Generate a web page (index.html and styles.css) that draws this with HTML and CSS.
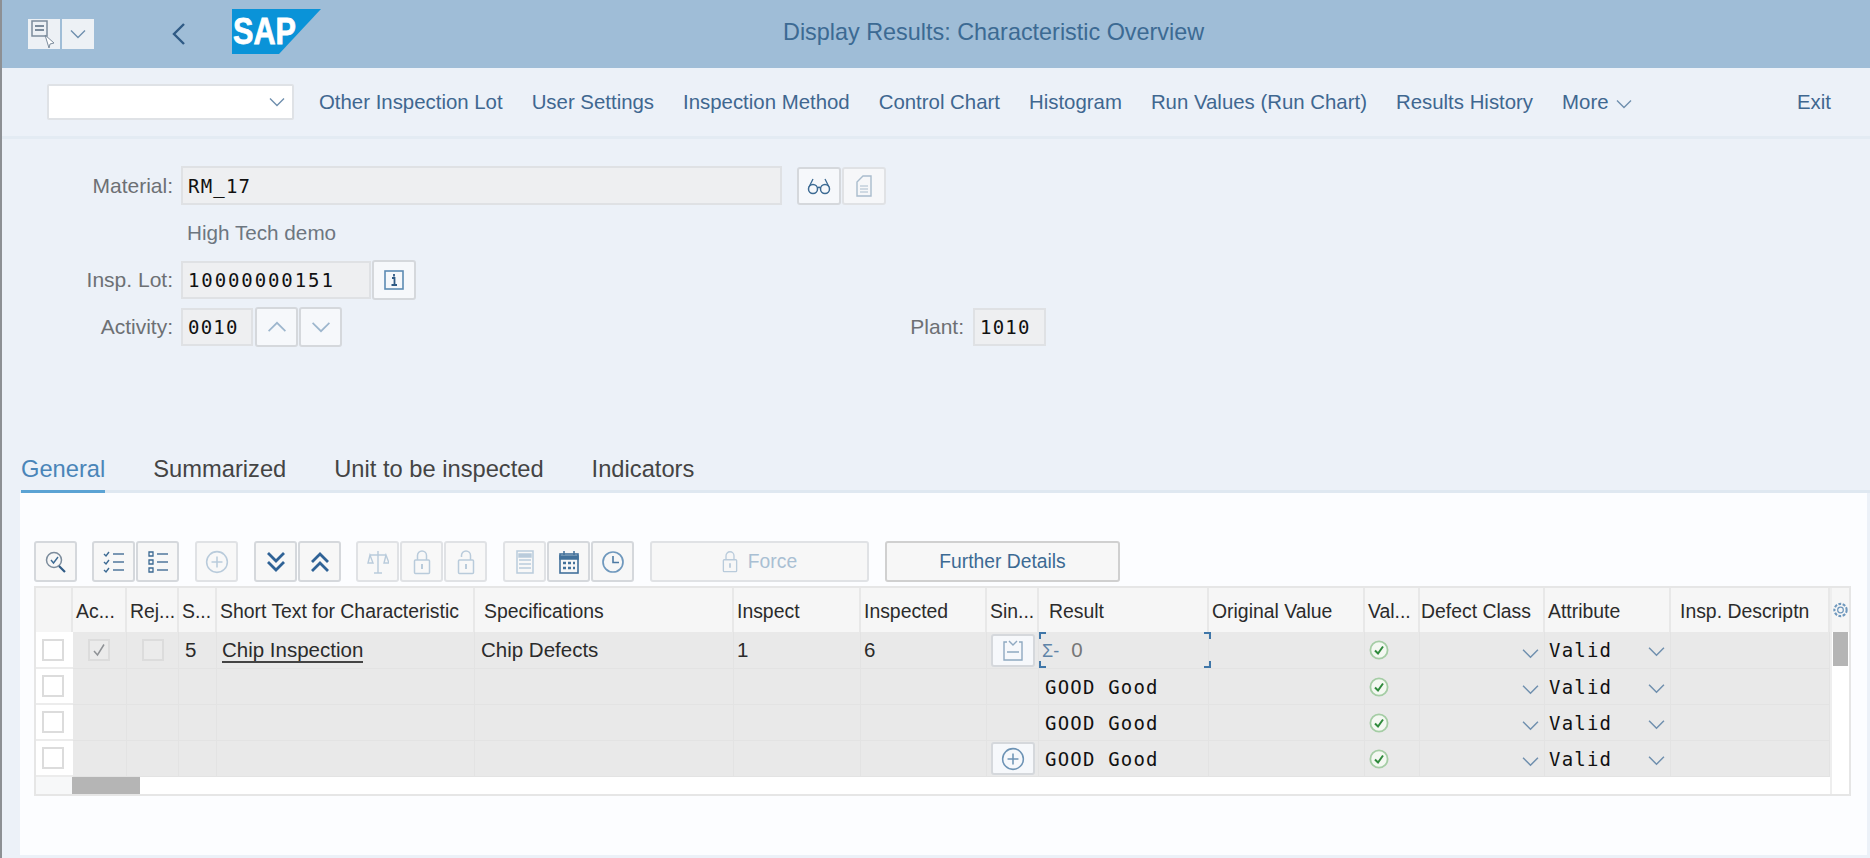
FILE: index.html
```html
<!DOCTYPE html>
<html lang="en">
<head>
  <meta charset="UTF-8">
  <title>Display Results: Characteristic Overview</title>
  <link rel="stylesheet" href="styles.css">
</head>
<body>
  <svg class="sprite" xmlns="http://www.w3.org/2000/svg">
    <symbol id="i-down" viewBox="0 0 16 10"><path d="M1 1.5 8 8.5 15 1.5" fill="none" stroke="currentColor" stroke-width="1.4"/></symbol>
    <symbol id="i-up" viewBox="0 0 16 10"><path d="M1 8.5 8 1.5 15 8.5" fill="none" stroke="currentColor" stroke-width="1.4"/></symbol>
    <symbol id="i-plus" viewBox="0 0 22 22"><circle cx="11" cy="11" r="9.5" fill="none" stroke="currentColor" stroke-width="1.4"/><path d="M11 6v10M6 11h10" stroke="currentColor" stroke-width="1.4"/></symbol>
    <symbol id="i-lock" viewBox="0 0 18 26"><rect x="1.5" y="11" width="15" height="13.5" rx="1" fill="none" stroke="currentColor" stroke-width="1.5"/><path d="M4.5 11V6.5a4.5 4.5 0 0 1 9 0V11" fill="none" stroke="currentColor" stroke-width="1.5"/><path d="M9 15v5" stroke="currentColor" stroke-width="2"/></symbol>
    <symbol id="i-unlock" viewBox="0 0 18 26"><rect x="1.5" y="11" width="15" height="13.5" rx="1" fill="none" stroke="currentColor" stroke-width="1.5"/><path d="M4.5 8V6.500a4.500 4.500 0 0 1 9 0V11" fill="none" stroke="currentColor" stroke-width="1.5"/><path d="M9 15v5" stroke="currentColor" stroke-width="2"/></symbol>
    <symbol id="i-check" viewBox="0 0 20 22"><circle cx="10" cy="11" r="8.600" fill="#f4f8f2" stroke="#a5cda5" stroke-width="1.800"/><path d="M6 11.500 9 14.500 14 7.500" fill="none" stroke="#2f8a3c" stroke-width="2"/></symbol>
  </svg>

  <div class="app">
    <header class="shell-bar">
      <div class="menu-btns">
        <button class="menu-btn">
          <svg width="28" height="30" viewBox="0 0 28 30"><rect x="2" y="2" width="15" height="15" fill="none" stroke="#7c8c9c" stroke-width="1.500"/><path d="M5 7h9M5 11h9" stroke="#7c8c9c" stroke-width="1.800"/><path d="M15 16l9 8-4 1-1 4z" fill="#fff" stroke="#7c8c9c"/></svg>
        </button>
        <button class="menu-btn menu-btn-arrow"><svg class="chev" width="16" height="10"><use href="#i-down"/></svg></button>
      </div>
      <svg class="back" width="16" height="24" viewBox="0 0 16 24"><path d="M13 2 3 12 13 22" fill="none" stroke="#2f5a85" stroke-width="2.400"/></svg>
      <svg class="logo" width="89" height="45" viewBox="0 0 89 45">
        <polygon points="0,0 89,0 47,45 0,45" fill="#0a93d8"/>
        <text x="1" y="35" class="logo-text" textLength="63" lengthAdjust="spacingAndGlyphs">SAP</text>
      </svg>
      <h1 class="title">Display Results: Characteristic Overview</h1>
    </header>

    <nav class="toolbar">
      <div class="combo"><svg class="chev" width="16" height="10"><use href="#i-down"/></svg></div>
      <a class="tool-link">Other Inspection Lot</a>
      <a class="tool-link">User Settings</a>
      <a class="tool-link">Inspection Method</a>
      <a class="tool-link">Control Chart</a>
      <a class="tool-link">Histogram</a>
      <a class="tool-link">Run Values (Run Chart)</a>
      <a class="tool-link">Results History</a>
      <a class="tool-link more">More <svg class="chev" width="16" height="10"><use href="#i-down"/></svg></a>
      <a class="tool-link exit">Exit</a>
    </nav>

    <section class="form">
      <div class="form-row row-material">
        <label class="form-label">Material:</label>
        <div class="input input-long">RM_17</div>
        <button class="btn btn-first">
          <svg width="24" height="18" viewBox="0 0 24 18"><circle cx="6" cy="12" r="4.500" fill="none" stroke="#3c6a93" stroke-width="1.500"/><circle cx="18" cy="12" r="4.500" fill="none" stroke="#3c6a93" stroke-width="1.500"/><path d="M10.500 11q1.500-1.500 3 0M2 10 6 2M22 10 18 2" fill="none" stroke="#3c6a93" stroke-width="1.300"/></svg>
        </button>
        <button class="btn btn-off">
          <svg width="18" height="22" viewBox="0 0 18 22"><path d="M2 7 8 1h8v20H2z" fill="none" stroke="#a9bccd" stroke-width="1.400"/><path d="M5 11h8M5 14h8M5 17h8" stroke="#a9bccd"/></svg>
        </button>
      </div>
      <div class="form-row row-desc">
        <span class="form-desc">High Tech demo</span>
      </div>
      <div class="form-row row-lot">
        <label class="form-label">Insp. Lot:</label>
        <div class="input input-lot">10000000151</div>
        <button class="btn btn-tall">
          <svg width="20" height="20" viewBox="0 0 20 20"><rect x="1" y="1" width="18" height="18" fill="none" stroke="#5d8bb3" stroke-width="1.600"/><path d="M8 8h2.500v7M7.500 15h5.500M10 4v2.500" fill="none" stroke="#2f5a85" stroke-width="1.800"/></svg>
        </button>
      </div>
      <div class="form-row row-activity">
        <label class="form-label">Activity:</label>
        <div class="input input-activity">0010</div>
        <button class="btn btn-arrow"><svg class="chev-light" width="20" height="12"><use href="#i-up"/></svg></button>
        <button class="btn btn-arrow"><svg class="chev-light" width="20" height="12"><use href="#i-down"/></svg></button>
        <label class="form-label plant-label">Plant:</label>
        <div class="input input-plant">1010</div>
      </div>
    </section>

    <div class="tabs">
      <a class="tab active">General</a>
      <a class="tab">Summarized</a>
      <a class="tab">Unit to be inspected</a>
      <a class="tab">Indicators</a>
    </div>

    <main class="panel">
      <div class="grid-tools">
        <div class="tool-group">
          <button class="btn tool"><svg width="24" height="26" viewBox="0 0 24 26"><circle cx="10" cy="11" r="7.500" fill="none" stroke="#7c8c9c" stroke-width="1.500"/><path d="M7 11l2.500 3L14 8" fill="none" stroke="#3c6a93" stroke-width="1.400"/><path d="M15 17l6 6" stroke="#2f5a85" stroke-width="2.200"/></svg></button>
        </div>
        <div class="tool-group tight">
          <button class="btn tool"><svg width="22" height="24" viewBox="0 0 22 24"><path d="M1 4l2 2 3-4M1 12l2 2 3-4M1 20l2 2 3-4" fill="none" stroke="#3c6a93" stroke-width="1.400"/><path d="M10 4h11M10 12h11M10 20h11" stroke="#7a97b3" stroke-width="1.800"/></svg></button>
          <button class="btn tool"><svg width="22" height="24" viewBox="0 0 22 24"><path d="M2 2h4v4H2zM2 10h4v4H2zM2 18h4v4H2z" fill="none" stroke="#3c6a93" stroke-width="1.300"/><path d="M10 4h11M10 12h11M10 20h11" stroke="#7a97b3" stroke-width="1.800"/></svg></button>
        </div>
        <div class="tool-group">
          <button class="btn tool btn-off"><svg class="ico-off" width="24" height="24"><use href="#i-plus"/></svg></button>
        </div>
        <div class="tool-group">
          <button class="btn tool"><svg width="24" height="24" viewBox="0 0 24 24"><path d="M4 3l8 8 8-8M4 12l8 8 8-8" fill="none" stroke="#2f6296" stroke-width="2.800"/></svg></button>
          <button class="btn tool"><svg width="24" height="24" viewBox="0 0 24 24"><path d="M4 12l8-8 8 8M4 21l8-8 8 8" fill="none" stroke="#2f6296" stroke-width="2.800"/></svg></button>
        </div>
        <div class="tool-group tight">
          <button class="btn tool btn-off"><svg class="ico-off" width="22" height="26" viewBox="0 0 22 26"><path d="M11 2v22M7 24h8M3 6h16M3 6l-2 8h5zM19 6l-2 8h5z" fill="none" stroke="currentColor" stroke-width="1.400"/></svg></button>
          <button class="btn tool btn-off"><svg class="ico-off" width="18" height="26"><use href="#i-lock"/></svg></button>
          <button class="btn tool btn-off"><svg class="ico-off" width="18" height="26"><use href="#i-unlock"/></svg></button>
        </div>
        <div class="tool-group">
          <button class="btn tool btn-off"><svg class="ico-off" width="18" height="24" viewBox="0 0 18 24"><rect x="1" y="1" width="16" height="22" fill="none" stroke="currentColor" stroke-width="1.500"/><path d="M3 4h12v3H3zM3 10h12M3 14h12M3 18h12" fill="currentColor" stroke="currentColor" stroke-width="1.400"/></svg></button>
          <button class="btn tool"><svg width="20" height="24" viewBox="0 0 20 24"><rect x="1" y="4" width="18" height="19" fill="none" stroke="#43719b" stroke-width="1.600"/><path d="M1 6h18v3H1zM5 1v4M15 1v4" fill="#43719b" stroke="#43719b" stroke-width="1.500"/><path d="M4 13h3M9 13h3M14 13h2M4 18h3M9 18h3M14 18h2" stroke="#43719b" stroke-width="2.500"/></svg></button>
          <button class="btn tool"><svg width="24" height="24" viewBox="0 0 24 24"><circle cx="12" cy="12" r="10" fill="none" stroke="#6f98bd" stroke-width="1.700"/><path d="M12 6v6.500h6" fill="none" stroke="#4d7aa3" stroke-width="1.600"/></svg></button>
        </div>
        <div class="tool-group">
          <button class="btn text-btn force btn-off"><svg class="ico-off" width="16" height="23"><use href="#i-lock"/></svg>Force</button>
        </div>
        <div class="tool-group">
          <button class="btn text-btn further">Further Details</button>
        </div>
      </div>

      <div class="frame">
        <table class="grid">
          <colgroup>
            <col class="c-sel"><col class="c-ac"><col class="c-rej"><col class="c-s"><col class="c-short"><col class="c-spec">
            <col class="c-insp"><col class="c-done"><col class="c-sin"><col class="c-result"><col class="c-orig">
            <col class="c-val"><col class="c-defect"><col class="c-attr"><col class="c-desc">
          </colgroup>
          <thead>
            <tr>
              <th class="sel"></th><th>Ac...</th><th>Rej...</th><th>S...</th><th>Short Text for Characteristic</th>
              <th class="pad-spec">Specifications</th><th>Inspect</th><th>Inspected</th><th>Sin...</th><th class="pad-result">Result</th>
              <th>Original Value</th><th>Val...</th><th class="pad-none">Defect Class</th><th>Attribute</th><th class="pad-spec">Insp. Descriptn</th>
            </tr>
          </thead>
          <tbody>
            <tr class="row-first">
              <td class="sel"><span class="box"></span></td>
              <td class="center"><span class="box box-off"><svg width="14" height="14" viewBox="0 0 14 14"><path d="M2 8l3.500 4L12 1.500" fill="none" stroke="#8f9296" stroke-width="1.500"/></svg></span></td>
              <td class="center"><span class="box box-off"></span></td>
              <td class="num">5</td>
              <td class="link-cell"><a class="link">Chip Inspection</a></td>
              <td class="spec-cell">Chip Defects</td>
              <td>1</td>
              <td>6</td>
              <td class="center"><button class="btn cell-btn"><svg width="22" height="24" viewBox="0 0 22 24"><path d="M5 4h-3v18h18V4h-3M7 3l4 4 4-4M5 14h12" fill="none" stroke="#8fa9c1" stroke-width="1.400"/></svg></button></td>
              <td class="focus-cell">
                <span class="corner tl"></span><span class="corner tr"></span><span class="corner bl"></span><span class="corner br"></span>
                <span class="sigma">Σ-</span><span class="zero">0</span>
              </td>
              <td></td>
              <td class="pad-val"><svg width="20" height="22"><use href="#i-check"/></svg></td>
              <td class="drop"><svg class="chev" width="17" height="11"><use href="#i-down"/></svg></td>
              <td class="drop mono"><span>Valid</span><svg class="chev" width="17" height="11"><use href="#i-down"/></svg></td>
              <td></td>
            </tr>
            <tr>
              <td class="sel"><span class="box"></span></td><td></td><td></td><td></td><td></td><td></td><td></td><td></td><td></td>
              <td class="mono result">GOOD Good</td><td></td>
              <td class="pad-val"><svg width="20" height="22"><use href="#i-check"/></svg></td>
              <td class="drop"><svg class="chev" width="17" height="11"><use href="#i-down"/></svg></td>
              <td class="drop mono"><span>Valid</span><svg class="chev" width="17" height="11"><use href="#i-down"/></svg></td>
              <td></td>
            </tr>
            <tr>
              <td class="sel"><span class="box"></span></td><td></td><td></td><td></td><td></td><td></td><td></td><td></td><td></td>
              <td class="mono result">GOOD Good</td><td></td>
              <td class="pad-val"><svg width="20" height="22"><use href="#i-check"/></svg></td>
              <td class="drop"><svg class="chev" width="17" height="11"><use href="#i-down"/></svg></td>
              <td class="drop mono"><span>Valid</span><svg class="chev" width="17" height="11"><use href="#i-down"/></svg></td>
              <td></td>
            </tr>
            <tr>
              <td class="sel"><span class="box"></span></td><td></td><td></td><td></td><td></td><td></td><td></td><td></td>
              <td class="center"><button class="btn cell-btn"><svg class="ico-plus" width="24" height="24"><use href="#i-plus"/></svg></button></td>
              <td class="mono result">GOOD Good</td><td></td>
              <td class="pad-val"><svg width="20" height="22"><use href="#i-check"/></svg></td>
              <td class="drop"><svg class="chev" width="17" height="11"><use href="#i-down"/></svg></td>
              <td class="drop mono"><span>Valid</span><svg class="chev" width="17" height="11"><use href="#i-down"/></svg></td>
              <td></td>
            </tr>
          </tbody>
        </table>
        <div class="vscroll">
          <div class="vscroll-head">
            <svg width="18" height="18" viewBox="0 0 18 18"><circle cx="9" cy="9" r="3" fill="none" stroke="#6f98bd" stroke-width="1.300"/><circle cx="9" cy="9" r="6.500" fill="none" stroke="#6f98bd" stroke-width="2.200" stroke-dasharray="3 1.600"/></svg>
          </div>
          <div class="vscroll-thumb"></div>
        </div>
        <div class="hscroll">
          <div class="hscroll-corner"></div>
          <div class="hscroll-thumb"></div>
        </div>
        <div class="scroll-end"></div>
      </div>
    </main>
  </div>
</body>
</html>
```

FILE: styles.css
```css
* {
  box-sizing: border-box;
}

body {
  margin: 0;
  height: 858px;
  overflow: hidden;
  background-color: #ecf1f8;
  font-family: "Liberation Sans", Arial, sans-serif;
}

.sprite {
  display: none;
}

.app {
  height: 858px;
  border-left: 2px solid #8d9094;
}

button {
  font-family: inherit;
  padding: 0;
}

.chev {
  color: #6f8fae;
}

.chev-light {
  color: #9db6cd;
}

.ico-off {
  color: #b9cbdb;
}

.ico-plus {
  color: #6d93b5;
}

/* top bar */
.shell-bar {
  display: flex;
  align-items: center;
  height: 68px;
  padding-left: 26px;
  position: relative;
  background-color: #9fbdd7;
}

.menu-btns {
  display: flex;
  gap: 2px;
}

.menu-btn {
  display: flex;
  align-items: center;
  justify-content: center;
  width: 32px;
  height: 30px;
  border: 0;
  background-color: #edf1f5;
}

.back {
  margin-left: 77px;
}

.logo {
  margin-left: 45px;
  margin-top: -6px;
}

.logo-text {
  font-family: "Liberation Sans", Arial, sans-serif;
  font-size: 36px;
  font-weight: bold;
  fill: #fff;
  stroke: #fff;
  stroke-width: 0.8px;
}

.title {
  position: absolute;
  top: 0;
  left: 781px;
  margin: 0;
  font-size: 23.4px;
  font-weight: normal;
  line-height: 64px;
  color: #3c6a93;
}

/* toolbar */
.toolbar {
  display: flex;
  align-items: center;
  height: 71px;
  padding-left: 45px;
  padding-right: 39px;
  border-bottom: 3px solid #e3ebf3;
}

.combo {
  display: flex;
  align-items: center;
  justify-content: flex-end;
  width: 247px;
  height: 36px;
  margin-right: 25px;
  padding-right: 7px;
  border: 2px solid #dfe2e6;
  border-radius: 2px;
  background-color: #fff;
}

.tool-link {
  margin-right: 29px;
  font-size: 20.4px;
  color: #3f6790;
}

.more {
  margin-right: 0;
}

.more .chev {
  margin-left: 2px;
}

.exit {
  margin-left: auto;
  margin-right: 0;
}

/* form */
.form {
  height: 312px;
  padding-top: 27px;
}

.form-row {
  display: flex;
  align-items: center;
}

.row-material {
  height: 39px;
}

.row-desc {
  height: 55px;
  padding-left: 185px;
}

.row-lot {
  height: 40px;
}

.row-activity {
  height: 40px;
  margin-top: 7px;
}

.form-label {
  width: 171px;
  margin-right: 8px;
  font-size: 21px;
  color: #6d7074;
  text-align: right;
}

.plant-label {
  width: 621px;
  margin-right: 9px;
}

.form-desc {
  font-size: 20.7px;
  color: #6d7680;
}

.input {
  display: flex;
  align-items: center;
  height: 38px;
  padding-left: 5px;
  border: 2px solid #dfe1e4;
  background-color: #eeeff1;
  font-family: "DejaVu Sans Mono", monospace;
  font-size: 19px;
  letter-spacing: 1.2px;
  color: #111;
}

.input-long {
  width: 601px;
  height: 39px;
  margin-right: 15px;
}

.input-lot {
  width: 190px;
  margin-right: 1px;
  letter-spacing: 1.9px;
}

.input-activity {
  width: 72px;
  margin-right: 2px;
}

.input-plant {
  width: 73px;
}

.btn {
  display: flex;
  align-items: center;
  justify-content: center;
  width: 44px;
  height: 38px;
  border: 2px solid #d5d8dc;
  border-radius: 3px;
  background-color: #f6f8fb;
  color: #3c6a93;
}

.btn-first {
  margin-right: 1px;
}

.btn-off {
  background-color: #f6f7f9;
  border-color: #e0e2e5;
}

.btn-tall {
  height: 40px;
}

.btn-arrow {
  width: 43px;
  height: 40px;
  margin-right: 1px;
}

/* tabs */
.tabs {
  display: flex;
  height: 43px;
  margin-top: -1px;
  margin-left: 19px;
  border-bottom: 3px solid #dfe8f1;
}

.tab {
  height: 43px;
  margin-right: 48px;
  padding-top: 6px;
  font-size: 23.7px;
  color: #444;
}

.tab.active {
  border-bottom: 3px solid #5ba3d4;
  color: #4a85b8;
}

/* panel */
.panel {
  height: 362px;
  margin-left: 18px;
  margin-right: 3px;
  padding-top: 48px;
  padding-left: 14px;
  background-color: #fcfdff;
}

.grid-tools {
  display: flex;
  gap: 16px;
  height: 41px;
}

.tool-group {
  display: flex;
  gap: 1px;
}

.tight {
  margin-left: -1px;
}

.tool {
  width: 43px;
  height: 41px;
  background-color: #f7f7f7;
}

.tool.btn-off {
  background-color: #f8f8f8;
}

.text-btn {
  height: 41px;
  gap: 10px;
  font-size: 19.3px;
  background-color: #f7f7f7;
  color: #3c6a93;
}

.force {
  width: 219px;
  color: #a9bfd3;
}

.further {
  width: 235px;
  border-color: #d0d0d0;
}

/* table */
.frame {
  display: grid;
  grid-template-columns: 1794px 19px;
  width: 1817px;
  margin-top: 4px;
  border: 2px solid #e6e6e6;
  background-color: #fff;
}

.grid {
  width: 1794px;
  table-layout: fixed;
  border-collapse: separate;
  border-spacing: 0;
  font-size: 20.5px;
  color: #2b2b2b;
}

.c-sel { width: 37px; }
.c-ac { width: 54px; }
.c-rej { width: 52px; }
.c-s { width: 38px; }
.c-short { width: 258px; }
.c-spec { width: 259px; }
.c-insp { width: 127px; }
.c-done { width: 126px; }
.c-sin { width: 52px; }
.c-result { width: 170px; }
.c-orig { width: 156px; }
.c-val { width: 55px; }
.c-defect { width: 125px; }
.c-attr { width: 126px; }
.c-desc { width: 159px; }

.grid th {
  height: 44px;
  padding: 2px 0 0 3px;
  border-right: 2px solid #e8e8e8;
  background-color: #f6f6f6;
  font-size: 19.4px;
  font-weight: normal;
  text-align: left;
  white-space: nowrap;
  overflow: hidden;
}

.grid th.sel {
  background-color: #f5f5f5;
}

.grid th.pad-spec {
  padding-left: 9px;
}

.grid th.pad-result {
  padding-left: 10px;
}

.grid th.pad-none {
  padding-left: 1px;
}

.grid td {
  height: 36px;
  padding: 0 0 0 3px;
  border-right: 1px solid #e3e3e3;
  border-bottom: 1px solid #e3e3e3;
  background-color: #e9e9e9;
  white-space: nowrap;
}

.row-first td {
  height: 37px;
}

.grid td.sel {
  padding: 0 0 0 6px;
  border-right: 0;
  border-bottom: 2px solid #ececec;
  background-color: #fff;
}

.grid td.center {
  padding: 0 0 0 3px;
}

.grid td.num {
  padding-left: 6px;
}

.grid td.link-cell {
  padding-left: 5px;
}

.grid td.spec-cell {
  padding-left: 6px;
}

.link {
  border-bottom: 2px solid #444;
  color: #2b2b2b;
}

.box {
  display: flex;
  align-items: center;
  justify-content: center;
  width: 22px;
  height: 22px;
  border: 2px solid #dcdcdc;
  background-color: #fff;
}

.box-off {
  margin-left: 12px;
  background-color: #ebebeb;
}

.cell-btn {
  width: 44px;
  height: 33px;
  margin-left: 1px;
}

.focus-cell {
  position: relative;
}

.corner {
  position: absolute;
  width: 7px;
  height: 7px;
  border: 0 solid #3f76a8;
}

.tl { top: 0; left: 0; border-width: 2px 0 0 2px; }
.tr { top: 0; right: -3px; border-width: 2px 2px 0 0; }
.bl { bottom: 0; left: 0; border-width: 0 0 2px 2px; }
.br { bottom: 0; right: -3px; border-width: 0 2px 2px 0; }

.sigma {
  font-size: 18px;
  color: #5f84a8;
}

.zero {
  margin-left: 12px;
  color: #777;
}

.mono {
  font-family: "DejaVu Sans Mono", monospace;
  font-size: 19px;
  letter-spacing: 1.2px;
  color: #111;
}

.grid td.result {
  padding-left: 6px;
}

.grid td.pad-val {
  padding-left: 4px;
}

.grid td.pad-val svg {
  display: block;
}

.grid td.drop {
  padding-right: 5px;
  text-align: right;
}

.grid td.drop.mono {
  padding-left: 4px;
  text-align: left;
}

.drop.mono .chev {
  float: right;
  margin-top: 7px;
}

.drop svg {
  vertical-align: middle;
  margin-top: 3px;
}

.vscroll {
  grid-row: 1;
  grid-column: 2;
  display: flex;
  flex-direction: column;
  border-left: 2px solid #eeeeee;
}

.vscroll-head {
  display: flex;
  align-items: center;
  height: 44px;
  background-color: #f6f6f6;
}

.vscroll-thumb {
  width: 15px;
  height: 34px;
  margin-left: 1px;
  background-color: #b5b5b5;
}

.hscroll {
  grid-row: 2;
  grid-column: 1;
  display: flex;
  height: 17px;
}

.hscroll-corner {
  width: 36px;
  background-color: #f7f8f9;
}

.hscroll-thumb {
  width: 68px;
  background-color: #b5b5b5;
}

.scroll-end {
  grid-row: 2;
  grid-column: 2;
  border-left: 2px solid #eeeeee;
}
```
